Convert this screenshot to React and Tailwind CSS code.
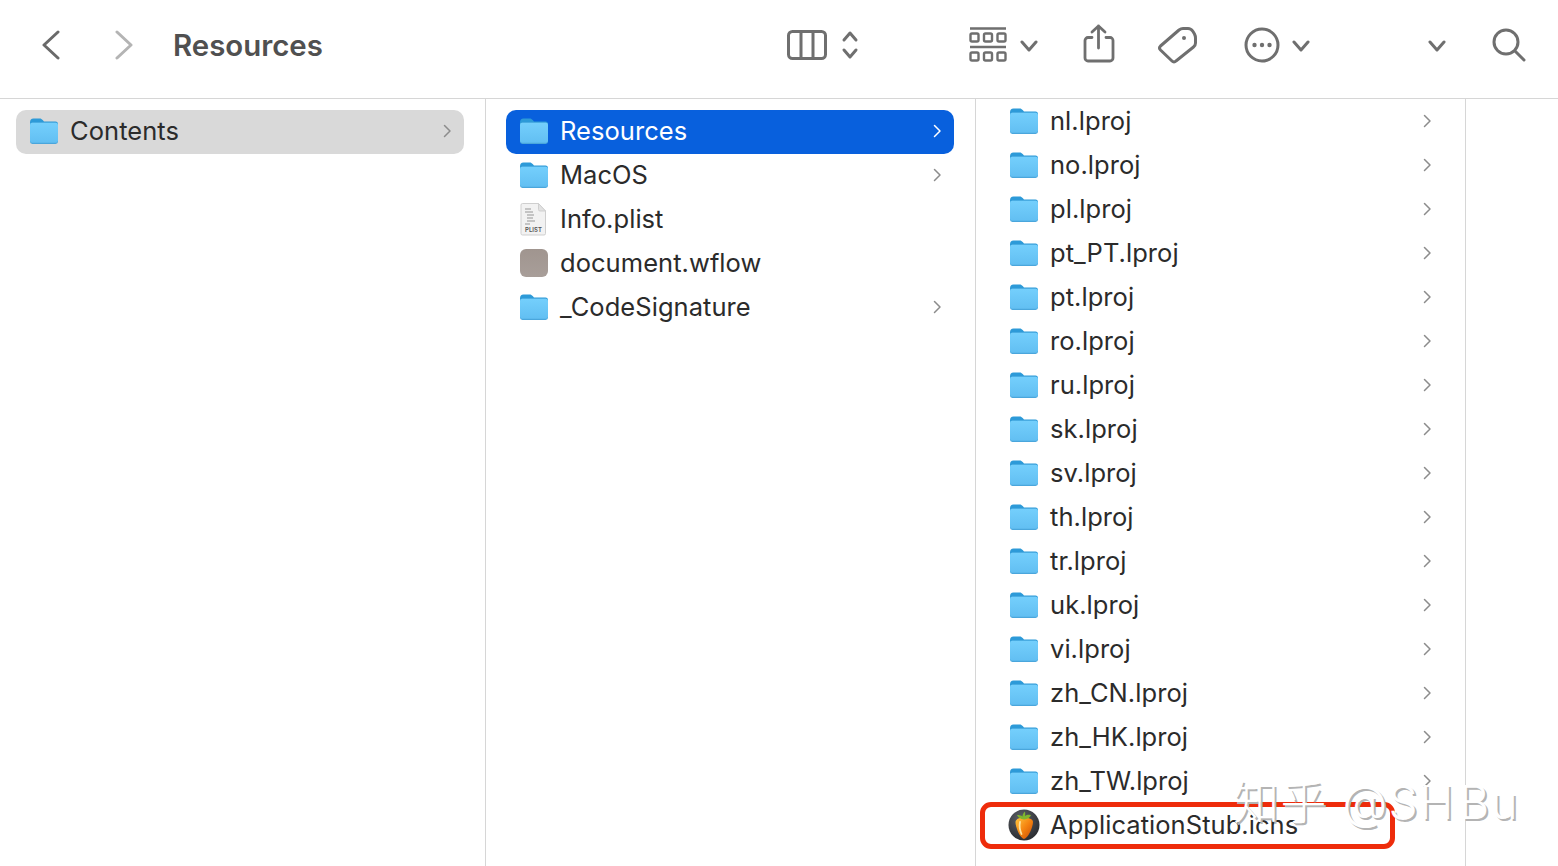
import React from 'react';

const Folder = () => (
  <svg width="30" height="28" viewBox="0 0 30 28" className="shrink-0">
    <defs>
      <linearGradient id="folderBody" x1="0" y1="0" x2="0" y2="1">
        <stop offset="0" stopColor="#74cffc" />
        <stop offset="1" stopColor="#62bff2" />
      </linearGradient>
    </defs>
    <path d="M1 5.5C1 3 2.2 1.5 4.5 1.5h6.2c1.4 0 2 .5 3 1.6l1.3 1.4h11.5c1.7 0 2.5 1 2.500 2.500V12H1z" fill="#2d9ad8" />
    <rect x="1" y="5.500" width="28" height="21.500" rx="2.400" fill="#4aa6dc" />
    <rect x="1" y="5.800" width="28" height="20" rx="2.200" fill="url(#folderBody)" />
  </svg>
);

const PlistIcon = () => (
  <svg width="30" height="34" viewBox="0 0 30 34" className="shrink-0">
    <path d="M3.5 1.5h16l7 7.5v22.500a1.500 1.500 0 0 1-1.500 1.500H3.500A1.500 1.500 0 0 1 2 31.500V3a1.500 1.500 0 0 1 1.500-1.500z" fill="#f2f2f2" stroke="#cfcfcf" />
    <path d="M19.500 1.500v6a1.500 1.500 0 0 0 1.500 1.500h5.500z" fill="#e2e2e2" stroke="#cfcfcf" />
    <path d="M6 7h6M6 10h8M8 13h7M8 16h6M8 19h8M6 22h5" stroke="#b5b5b5" strokeWidth="1.400" />
    <text x="14.500" y="30" textAnchor="middle" fontSize="6" fontFamily="Inter, sans-serif" fontWeight="600" fill="#555">PLIST</text>
  </svg>
);

const WflowIcon = () => (
  <div className="ml-px h-[28px] w-[28px] shrink-0 rounded-[6px] bg-gradient-to-b from-[#a0958f] to-[#a89e99]" />
);

const FlIcon = () => (
  <svg width="32" height="32" viewBox="0 0 32 32" className="shrink-0 -ml-px">
    <defs>
      <radialGradient id="flBack" cx="0.4" cy="0.3" r="0.8">
        <stop offset="0" stopColor="#5d6168" />
        <stop offset="1" stopColor="#24262a" />
      </radialGradient>
      <linearGradient id="flFruit" x1="0" y1="0" x2="1" y2="1">
        <stop offset="0" stopColor="#ffc83f" />
        <stop offset="0.5" stopColor="#f58410" />
        <stop offset="1" stopColor="#c94a05" />
      </linearGradient>
    </defs>
    <circle cx="16" cy="16" r="15.500" fill="url(#flBack)" />
    <path d="M7.500 13c0-3 4-4.500 8.500-4.500s9 1.500 9 4.500c0 5.500-5 16-9 17C12 29 7.500 18.500 7.500 13z" fill="url(#flFruit)" />
    <path d="M16 10.500c-3.500-.5-6-2-7-4.500 2.500 0 4.500.5 5.500 1.500C14.500 5.500 15.500 3.500 17 2.500c.3 1.500.3 3 0 4.500 1.500-1 4-1.500 6-.8-1 2.300-3.500 4-7 4.300z" fill="#7fb52e" />
    <path d="M12 13c-.8 3.500-.2 8 1.500 12" stroke="#ffe3a0" strokeWidth="1.800" fill="none" strokeLinecap="round" />
  </svg>
);

const RowChevron = ({selected}) => (
  <svg width="10" height="16" viewBox="0 0 10 16" className="shrink-0">
    <path d="M2.500 2.500l5.500 5.500-5.500 5.500" fill="none" stroke={selected ? '#ffffff' : '#8c8c8c'} strokeWidth="1.500" strokeLinecap="round" strokeLinejoin="round" />
  </svg>
);

const Row = ({name, icon, arrow, state}) => {
  let bg = '';
  let color = 'text-[#2b2b2b]';
  if (state === 'selected') {
    bg = 'bg-[#0860dd]';
    color = 'text-white';
  } else if (state === 'inactive') {
    bg = 'bg-[#d9d9d9]';
  }
  return (
    <div className={`flex h-[44px] items-center rounded-[10px] pb-[2px] pl-[13px] pr-[12px] ${bg}`}>
      <div className="flex w-[41px] shrink-0 items-center">{icon || <Folder />}</div>
      <span className={`flex-1 text-[25.500px] leading-none tracking-[0.05px] ${color}`}>{name}</span>
      {arrow && <RowChevron selected={state === 'selected'} />}
    </div>
  );
};

const ToolIcon = ({w, h, ml, children}) => (
  <svg width={w} height={h} viewBox={`0 0 ${w} ${h}`} className="shrink-0" style={{marginLeft: ml}} fill="none" stroke="#6f6f6f" strokeWidth="3" strokeLinecap="round" strokeLinejoin="round">
    {children}
  </svg>
);

const SmallChevron = ({ml}) => (
  <ToolIcon w={18} h={14} ml={ml}>
    <path d="M2 4l7 8 7-8" />
  </ToolIcon>
);

const lproj = ['nl', 'no', 'pl', 'pt_PT', 'pt', 'ro', 'ru', 'sk', 'sv', 'th', 'tr', 'uk', 'vi', 'zh_CN', 'zh_HK', 'zh_TW'];

const Toolbar = () => (
  <div className="flex h-[99px] shrink-0 items-center border-b border-[#d6d6d6] bg-white pb-[8px]">
    <ToolIcon w={20} h={30} ml={41}>
      <path d="M17 2L3 15l14 13" stroke="#6a6a6a" />
    </ToolIcon>
    <ToolIcon w={20} h={30} ml={53}>
      <path d="M3 2l14 13L3 28" stroke="#b4b4b4" />
    </ToolIcon>
    <h1 className="ml-[39px] mt-[2px] w-[150px] shrink-0 text-[29.400px] font-semibold leading-none text-[#505050]">Resources</h1>
    <ToolIcon w={40} h={32} ml={464}>
      <rect x="1.500" y="2.500" width="37" height="27" rx="4" />
      <path d="M14 3v26M26 3v26" />
    </ToolIcon>
    <ToolIcon w={18} h={32} ml={14}>
      <path d="M3 11l6-7 6 7M3 21l6 7 6-7" />
    </ToolIcon>
    <svg width="38" height="36" viewBox="0 0 38 36" className="ml-[110px] shrink-0" fill="none" stroke="#6f6f6f">
      <path d="M1 1.500h36M1 20h36" strokeWidth="2.600" />
      <rect x="1.500" y="6.500" width="8" height="8" rx="1.500" strokeWidth="2.400" />
      <rect x="15" y="6.500" width="8" height="8" rx="1.500" strokeWidth="2.400" />
      <rect x="28.500" y="6.500" width="8" height="8" rx="1.500" strokeWidth="2.400" />
      <rect x="1.500" y="25.500" width="8" height="8" rx="1.500" strokeWidth="2.400" />
      <rect x="15" y="25.500" width="8" height="8" rx="1.500" strokeWidth="2.400" />
      <rect x="28.500" y="25.500" width="8" height="8" rx="1.500" strokeWidth="2.400" />
    </svg>
    <SmallChevron ml={13} />
    <svg width="34" height="39" viewBox="0 0 34 39" className="ml-[44px] -mt-[3px] shrink-0" fill="none" stroke="#6f6f6f" strokeWidth="2.800" strokeLinecap="round" strokeLinejoin="round">
      <path d="M10 13.500H6a3 3 0 0 0-3 3V34a3 3 0 0 0 3 3h22a3 3 0 0 0 3-3V16.500a3 3 0 0 0-3-3h-4" />
      <path d="M16.500 24V2M10 8l6.500-6L23 8" />
    </svg>
    <svg width="40" height="38" viewBox="0 0 40 38" className="ml-[41px] shrink-0" fill="none" stroke="#6f6f6f" strokeWidth="3" strokeLinejoin="round">
      <path d="M3.500 20L22 4q2-1.500 4-1.500h5q3 0 5 3l1.500 2.500q1 2 1 4v5q0 2.500-2 4L19 35q-2 2-4 0L3.500 24q-2-2 0-4z" />
      <circle cx="27" cy="12" r="2" fill="#6f6f6f" stroke="none" />
    </svg>
    <svg width="36" height="36" viewBox="0 0 36 36" className="ml-[47px] shrink-0" fill="none" stroke="#6f6f6f" strokeWidth="3">
      <circle cx="18" cy="18" r="16" />
      <circle cx="10.500" cy="18" r="2.200" fill="#6f6f6f" stroke="none" />
      <circle cx="18" cy="18" r="2.200" fill="#6f6f6f" stroke="none" />
      <circle cx="25.500" cy="18" r="2.200" fill="#6f6f6f" stroke="none" />
    </svg>
    <SmallChevron ml={12} />
    <SmallChevron ml={118} />
    <ToolIcon w={34} h={34} ml={46}>
      <circle cx="14" cy="14" r="12" />
      <path d="M23 23l9 9" />
    </ToolIcon>
  </div>
);

export default function App() {
  return (
    <div className="relative flex h-[866px] w-full flex-col overflow-hidden bg-white font-['Inter','Noto_Sans',sans-serif]">
      <Toolbar />
      <div className="flex min-h-0 flex-1">
        <div className="w-[486px] shrink-0 border-r border-[#d6d6d6] pl-[16px] pr-[21px] pt-[11px]">
          <Row name="Contents" arrow state="inactive" />
        </div>
        <div className="w-[490px] shrink-0 border-r border-[#d6d6d6] pl-[20px] pr-[21px] pt-[11px]">
          <Row name="Resources" arrow state="selected" />
          <Row name="MacOS" arrow />
          <Row name="Info.plist" icon={<PlistIcon />} />
          <Row name="document.wflow" icon={<WflowIcon />} />
          <Row name="_CodeSignature" arrow />
        </div>
        <div className="w-[490px] shrink-0 border-r border-[#d6d6d6] pl-[20px] pr-[21px] pt-px">
          {lproj.map((l) => (
            <Row key={l} name={`${l}.lproj`} arrow />
          ))}
          <Row name="ApplicationStub.icns" icon={<FlIcon />} />
        </div>
      </div>
      {/* red annotation around the icns file */}
      <div className="absolute left-[980px] top-[802px] h-[47px] w-[415px] rounded-[11px] border-[5px] border-[#ee2c0b]" />
      {/* site watermark */}
      <div className="absolute left-[1233px] top-[772px] whitespace-nowrap font-['Inter','Noto_Sans_CJK_SC',sans-serif] text-[46px] font-light leading-[60px] tracking-[1.500px] text-white [text-shadow:2px_2px_0_#b4b4b4]">
        知乎 @SH <span className="-ml-[10px]">Bu</span>
      </div>
    </div>
  );
}
